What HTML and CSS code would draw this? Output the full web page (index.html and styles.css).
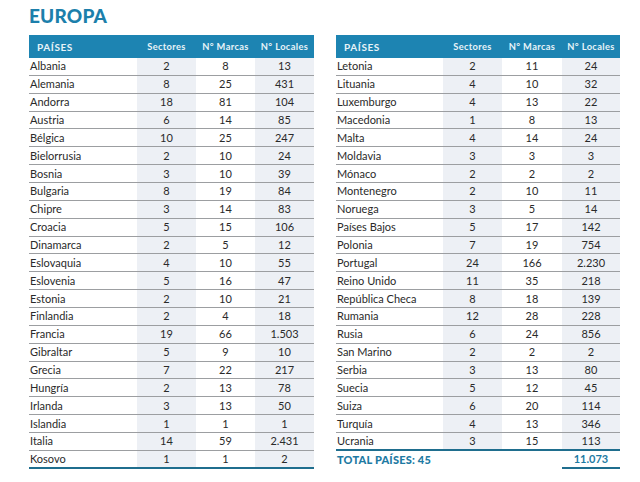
FILE: index.html
```html
<!DOCTYPE html>
<html lang="es">
<head>
<meta charset="utf-8">
<link rel="stylesheet" href="styles.css">
</head>
<body>
<div class="page">
  <h1 class="title">EUROPA</h1>
  <div class="tables">
    <div class="table">
      <div class="row head"><div class="name">PAÍSES</div><div>Sectores</div><div>N° Marcas</div><div>N° Locales</div></div>
      <div class="row"><div class="name">Albania</div><div class="s">2</div><div>8</div><div class="s">13</div></div>
      <div class="row"><div class="name">Alemania</div><div class="s">8</div><div>25</div><div class="s">431</div></div>
      <div class="row"><div class="name">Andorra</div><div class="s">18</div><div>81</div><div class="s">104</div></div>
      <div class="row"><div class="name">Austria</div><div class="s">6</div><div>14</div><div class="s">85</div></div>
      <div class="row"><div class="name">Bélgica</div><div class="s">10</div><div>25</div><div class="s">247</div></div>
      <div class="row"><div class="name">Bielorrusia</div><div class="s">2</div><div>10</div><div class="s">24</div></div>
      <div class="row"><div class="name">Bosnia</div><div class="s">3</div><div>10</div><div class="s">39</div></div>
      <div class="row"><div class="name">Bulgaria</div><div class="s">8</div><div>19</div><div class="s">84</div></div>
      <div class="row"><div class="name">Chipre</div><div class="s">3</div><div>14</div><div class="s">83</div></div>
      <div class="row"><div class="name">Croacia</div><div class="s">5</div><div>15</div><div class="s">106</div></div>
      <div class="row"><div class="name">Dinamarca</div><div class="s">2</div><div>5</div><div class="s">12</div></div>
      <div class="row"><div class="name">Eslovaquia</div><div class="s">4</div><div>10</div><div class="s">55</div></div>
      <div class="row"><div class="name">Eslovenia</div><div class="s">5</div><div>16</div><div class="s">47</div></div>
      <div class="row"><div class="name">Estonia</div><div class="s">2</div><div>10</div><div class="s">21</div></div>
      <div class="row"><div class="name">Finlandia</div><div class="s">2</div><div>4</div><div class="s">18</div></div>
      <div class="row"><div class="name">Francia</div><div class="s">19</div><div>66</div><div class="s">1.503</div></div>
      <div class="row"><div class="name">Gibraltar</div><div class="s">5</div><div>9</div><div class="s">10</div></div>
      <div class="row"><div class="name">Grecia</div><div class="s">7</div><div>22</div><div class="s">217</div></div>
      <div class="row"><div class="name">Hungría</div><div class="s">2</div><div>13</div><div class="s">78</div></div>
      <div class="row"><div class="name">Irlanda</div><div class="s">3</div><div>13</div><div class="s">50</div></div>
      <div class="row"><div class="name">Islandia</div><div class="s">1</div><div>1</div><div class="s">1</div></div>
      <div class="row"><div class="name">Italia</div><div class="s">14</div><div>59</div><div class="s">2.431</div></div>
      <div class="row last"><div class="name">Kosovo</div><div class="s">1</div><div>1</div><div class="s">2</div></div>
    </div>
    <div class="table">
      <div class="row head"><div class="name">PAÍSES</div><div>Sectores</div><div>N° Marcas</div><div>N° Locales</div></div>
      <div class="row"><div class="name">Letonia</div><div class="s">2</div><div>11</div><div class="s">24</div></div>
      <div class="row"><div class="name">Lituania</div><div class="s">4</div><div>10</div><div class="s">32</div></div>
      <div class="row"><div class="name">Luxemburgo</div><div class="s">4</div><div>13</div><div class="s">22</div></div>
      <div class="row"><div class="name">Macedonia</div><div class="s">1</div><div>8</div><div class="s">13</div></div>
      <div class="row"><div class="name">Malta</div><div class="s">4</div><div>14</div><div class="s">24</div></div>
      <div class="row"><div class="name">Moldavia</div><div class="s">3</div><div>3</div><div class="s">3</div></div>
      <div class="row"><div class="name">Mónaco</div><div class="s">2</div><div>2</div><div class="s">2</div></div>
      <div class="row"><div class="name">Montenegro</div><div class="s">2</div><div>10</div><div class="s">11</div></div>
      <div class="row"><div class="name">Noruega</div><div class="s">3</div><div>5</div><div class="s">14</div></div>
      <div class="row"><div class="name">Países Bajos</div><div class="s">5</div><div>17</div><div class="s">142</div></div>
      <div class="row"><div class="name">Polonia</div><div class="s">7</div><div>19</div><div class="s">754</div></div>
      <div class="row"><div class="name">Portugal</div><div class="s">24</div><div>166</div><div class="s">2.230</div></div>
      <div class="row"><div class="name">Reino Unido</div><div class="s">11</div><div>35</div><div class="s">218</div></div>
      <div class="row"><div class="name">República Checa</div><div class="s">8</div><div>18</div><div class="s">139</div></div>
      <div class="row"><div class="name">Rumania</div><div class="s">12</div><div>28</div><div class="s">228</div></div>
      <div class="row"><div class="name">Rusia</div><div class="s">6</div><div>24</div><div class="s">856</div></div>
      <div class="row"><div class="name">San Marino</div><div class="s">2</div><div>2</div><div class="s">2</div></div>
      <div class="row"><div class="name">Serbia</div><div class="s">3</div><div>13</div><div class="s">80</div></div>
      <div class="row"><div class="name">Suecia</div><div class="s">5</div><div>12</div><div class="s">45</div></div>
      <div class="row"><div class="name">Suiza</div><div class="s">6</div><div>20</div><div class="s">114</div></div>
      <div class="row"><div class="name">Turquía</div><div class="s">4</div><div>13</div><div class="s">346</div></div>
      <div class="row last"><div class="name">Ucrania</div><div class="s">3</div><div>15</div><div class="s">113</div></div>
      <div class="row total"><div class="name tlabel">TOTAL PAÍSES: 45</div><div class="tsum">11.073</div></div>
    </div>
  </div>
</div>
</body>
</html>
```

FILE: styles.css
```css
html, body {
  margin: 0;
  padding: 0;
  background: #ffffff;
}

.page {
  padding: 6px 0 0 29px;
  font-family: Lato, "Open Sans", "Liberation Sans", sans-serif;
  color: #2a2a2a;
}

.title {
  margin: 0;
  height: 29px;
  font-family: Lato, "Liberation Sans", sans-serif;
  font-weight: 900;
  font-size: 19px;
  line-height: 20px;
  color: #1c7fab;
  letter-spacing: 0.2px;
}

.tables {
  display: flex;
  gap: 22px;
}

.table {
  display: flex;
  flex-direction: column;
}

.row {
  display: grid;
  grid-template-columns: 108px 59px 59px 59px;
  height: 17.87px;
  box-sizing: border-box;
  border-bottom: 1px solid #9c9ea1;
  font-size: 11px;
  line-height: 16px;
}

.table + .table .row {
  grid-template-columns: 107px 59px 60px 58px;
}

.row > div {
  text-align: center;
  display: flex;
  align-items: center;
  justify-content: center;
}

.row > .name {
  justify-content: flex-start;
  padding-left: 1px;
}

.row > .s {
  background: #edf0f5;
}

.row.head {
  height: 23px;
  background: #1d84b2;
  border-bottom: none;
  color: #e8f3f8;
  font-weight: 700;
  font-size: 9.3px;
  letter-spacing: 0.35px;
}

.row.head > .name {
  padding-left: 8px;
  font-size: 10px;
  letter-spacing: 0.6px;
}

.row.last {
  border-bottom: 2px solid #1f6e8e;
}

.row.total {
  border-bottom: none;
  height: 18px;
}

.tlabel {
  grid-column: 1 / 4;
  color: #1d7aa3;
  font-weight: 900;
  font-size: 11px;
  letter-spacing: 0.2px;
}

.tsum {
  grid-column: 4;
  color: #1d7aa3;
  font-weight: 700;
  border-bottom: 2px solid #1f6e8e;
}
```
